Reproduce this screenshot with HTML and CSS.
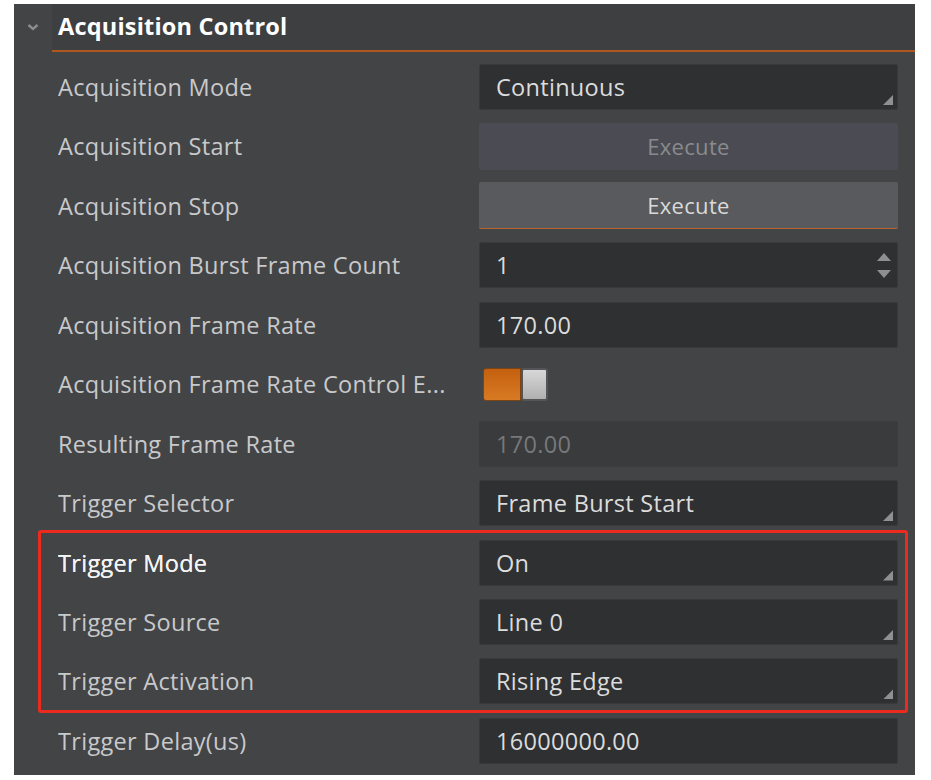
FILE: index.html
```html
<!DOCTYPE html>
<html lang="en">
<head>
<meta charset="utf-8">
<title>Acquisition Control</title>
<link rel="stylesheet" href="styles.css">
</head>
<body>
<div class="panel">
  <div class="header">
    <div class="chev">
      <svg width="14" height="10" viewBox="0 0 14 10"><path d="M2.5 3 L7 7 L11.5 3" fill="none" stroke="#8c8d8f" stroke-width="2.4"/></svg>
    </div>
    <div class="title">Acquisition Control</div>
  </div>
  <div class="rows">
    <div class="row">
      <div class="label">Acquisition Mode</div>
      <div class="field select">Continuous</div>
    </div>
    <div class="row">
      <div class="label">Acquisition Start</div>
      <div class="btn disabled">Execute</div>
    </div>
    <div class="row">
      <div class="label">Acquisition Stop</div>
      <div class="btn active">Execute</div>
    </div>
    <div class="row">
      <div class="label">Acquisition Burst Frame Count</div>
      <div class="field spin">1
        <span class="arrows">
          <svg width="16" height="26" viewBox="0 0 16 26"><path d="M8 0 L15 8 L1 8 Z" fill="#8e8f91"/><path d="M1 17 L15 17 L8 25 Z" fill="#8e8f91"/></svg>
        </span>
      </div>
    </div>
    <div class="row">
      <div class="label">Acquisition Frame Rate</div>
      <div class="field">170.00</div>
    </div>
    <div class="row">
      <div class="label">Acquisition Frame Rate Control E...</div>
      <div class="toggle-cell">
        <div class="toggle"><span class="on"></span><span class="knob"></span></div>
      </div>
    </div>
    <div class="row">
      <div class="label">Resulting Frame Rate</div>
      <div class="field readonly">170.00</div>
    </div>
    <div class="row">
      <div class="label">Trigger Selector</div>
      <div class="field select">Frame Burst Start</div>
    </div>
    <div class="group">
      <div class="row">
        <div class="label strong">Trigger Mode</div>
        <div class="field select">On</div>
      </div>
      <div class="row">
        <div class="label">Trigger Source</div>
        <div class="field select">Line 0</div>
      </div>
      <div class="row">
        <div class="label">Trigger Activation</div>
        <div class="field select">Rising Edge</div>
      </div>
    </div>
    <div class="row">
      <div class="label">Trigger Delay(us)</div>
      <div class="field">16000000.00</div>
    </div>
  </div>
</div>
</body>
</html>
```

FILE: styles.css
```css
html, body {
  margin: 0;
  padding: 0;
  background: #ffffff;
}

body {
  font-family: "Open Sans", "Noto Sans", "DejaVu Sans", sans-serif;
}

.panel {
  margin: 4px 0 0 14px;
  width: 901px;
  height: 771px;
  background: #434446;
  overflow: hidden;
}

.header {
  display: flex;
  height: 48px;
}

.chev {
  width: 38px;
  display: flex;
  align-items: center;
  justify-content: center;
  padding-bottom: 2px;
  box-sizing: border-box;
}

.title {
  flex: 1;
  background: #3e3f41;
  border-bottom: 2.5px solid #b0571f;
  color: #ffffff;
  font-weight: 700;
  font-size: 23.5px;
  letter-spacing: 0.2px;
  line-height: 45.5px;
  padding-left: 6px;
}

.rows {
  padding-top: 5.3px;
}

.group {
  position: relative;
}

.group::after {
  content: "";
  position: absolute;
  top: -3px;
  bottom: -2px;
  left: 24px;
  right: 7px;
  border: 3px solid #ec2b1e;
  border-radius: 3px;
  pointer-events: none;
}

.row {
  display: grid;
  grid-template-columns: 1fr 419px;
  align-items: center;
  height: 59.45px;
  padding: 0 17px 0 44px;
}

.label {
  color: #c8c9cb;
  font-size: 23.5px;
  letter-spacing: 0.3px;
  white-space: nowrap;
  overflow: hidden;
}

.label.strong {
  color: #f4f4f4;
  font-weight: 500;
  text-shadow: 0 0 0.4px #f4f4f4;
}

.field {
  position: relative;
  height: 46px;
  box-sizing: border-box;
  background: #2f3032;
  border: 1px solid #38393b;
  border-radius: 2px;
  color: #dcdcdc;
  font-size: 23.5px;
  letter-spacing: 0.3px;
  line-height: 44px;
  padding-left: 16px;
}

.field.select::after {
  content: "";
  position: absolute;
  right: 4px;
  bottom: 4px;
  width: 10px;
  height: 10px;
  background: #8f9092;
  clip-path: polygon(100% 0, 100% 100%, 0 100%);
}

.field.readonly {
  background: #3a3b3d;
  border-color: #3b3c3e;
  color: #77787a;
}

.arrows {
  position: absolute;
  right: 5px;
  top: 10px;
  display: flex;
}

.btn {
  height: 47px;
  box-sizing: border-box;
  border-radius: 2px;
  text-align: center;
  font-size: 22px;
  letter-spacing: 0.3px;
  line-height: 46px;
}

.btn.disabled {
  background: #4b4c53;
  color: #8a8b8e;
}

.btn.active {
  background: #595a5d;
  color: #dadada;
  border-bottom: 1px solid #b8642c;
}

.toggle-cell {
  display: flex;
  align-items: center;
  padding-left: 4px;
}

.toggle {
  display: flex;
  height: 33px;
}

.toggle .on {
  width: 38px;
  box-sizing: border-box;
  border: 1px solid #7a4414;
  border-radius: 3px 0 0 3px;
  background: linear-gradient(#c4600f, #d87a24);
}

.toggle .knob {
  width: 27px;
  box-sizing: border-box;
  border: 2px solid #545558;
  border-radius: 3px;
  background: linear-gradient(#d8d8d8, #b0b0b0);
}
```
